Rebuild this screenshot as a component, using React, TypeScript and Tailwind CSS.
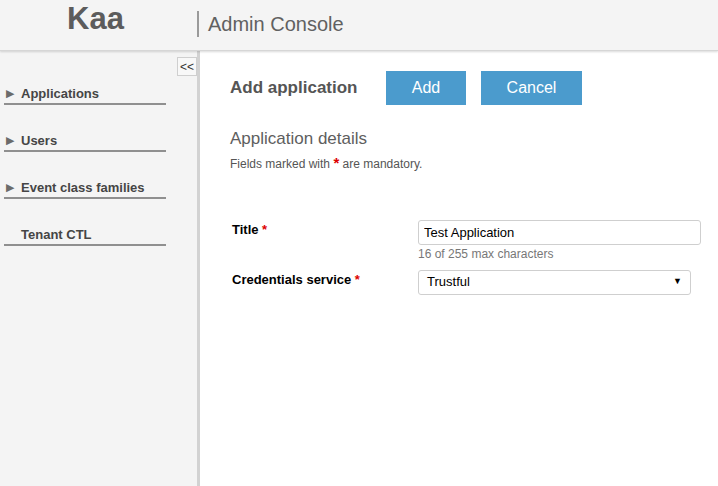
import { useState } from "react";

const navItems = [
    { label: "Applications", arrow: true },
    { label: "Users", arrow: true },
    { label: "Event class families", arrow: true },
    { label: "Tenant CTL", arrow: false },
];

export default function App() {
    const [title, setTitle] = useState("Test Application");

    return (
        <div className="w-[718px] h-[486px] overflow-hidden flex flex-col bg-white font-['Liberation_Sans',Arial,sans-serif]">
            <header className="h-[51px] shrink-0 flex items-center bg-[#f4f4f4] border-b border-[#d6d6d6] shadow-[0_1px_2px_rgba(0,0,0,0.15)] z-10">
                <div className="w-[197px] flex justify-center pr-[6px] mt-[-14px]">
                    <span className="text-[31px] font-bold text-[#5c5c5c] leading-none">Kaa</span>
                </div>
                <div className="h-[26px] w-[2px] bg-[#9a9a9a] mt-[-2px]" />
                <span className="ml-[9px] text-[20px] text-[#616161] mt-[-2px]">Admin Console</span>
            </header>

            <div className="flex flex-1 min-h-0">
                <aside className="w-[200px] shrink-0 bg-[#f4f4f4] border-r-[3px] border-[#d2d2d2] relative">
                    <button className="absolute right-0 top-[6px] w-[20px] h-[19px] border border-[#cfcfcf] bg-[#f8f8f8] text-[12px] leading-none text-[#333]">
                        &lt;&lt;
                    </button>
                    <nav className="pt-[7px] flex flex-col">
                        {navItems.map((item, i) => (
                            <div key={i} className="ml-[4px] w-[162px] h-[47px] flex items-end">
                                <div className="w-full border-b-2 border-[#8f8f8f] flex items-start h-[21px]">
                                    <span className="w-[17px] text-[11px] text-[#6b6b6b] pl-[2px] pt-[1px]">
                                        {item.arrow ? "▶" : ""}
                                    </span>
                                    <span className="text-[13px] font-bold text-[#454545]">{item.label}</span>
                                </div>
                            </div>
                        ))}
                    </nav>
                </aside>

                <main className="flex-1 pl-[30px] pt-[20px]">
                    <div className="flex items-center">
                        <h1 className="text-[17px] font-bold text-[#555] w-[156px]">Add application</h1>
                        <button className="w-[80px] h-[34px] bg-[#4b9bcd] text-white text-[16px]">Add</button>
                        <button className="ml-[15px] w-[101px] h-[34px] bg-[#4b9bcd] text-white text-[16px]">Cancel</button>
                    </div>
                    <h2 className="mt-[21px] text-[17px] text-[#5e5e5e]">Application details</h2>
                    <p className="mt-[3px] text-[12px] text-[#555]">
                        Fields marked with <span className="text-[#d00] font-bold text-[15px] leading-none">*</span> are mandatory.
                    </p>

                    <div className="mt-[47px] flex flex-col">
                        <div className="flex">
                            <label className="w-[188px] pl-[2px] text-[13px] font-bold text-black">
                                Title <span className="text-[#d00]">*</span>
                            </label>
                            <div>
                                <input
                                    value={title}
                                    onChange={(e) => setTitle(e.target.value)}
                                    className="w-[283px] h-[25px] px-[5px] border border-[#cfcfcf] rounded-[3px] text-[13px] text-black outline-none"
                                />
                                <div className="text-[12px] text-[#777] mt-[2px] leading-[14px]">16 of 255 max characters</div>
                            </div>
                        </div>
                        <div className="flex mt-[9px]">
                            <label className="w-[188px] pl-[2px] text-[13px] font-bold text-black">
                                Credentials service <span className="text-[#d00]">*</span>
                            </label>
                            <div className="w-[273px] h-[25px] border border-[#cfcfcf] rounded-[3px] flex items-center justify-between px-[8px] text-[13px] text-black">
                                <span>Trustful</span>
                                <span className="text-[9px]">▼</span>
                            </div>
                        </div>
                    </div>
                </main>
            </div>
        </div>
    );
}
